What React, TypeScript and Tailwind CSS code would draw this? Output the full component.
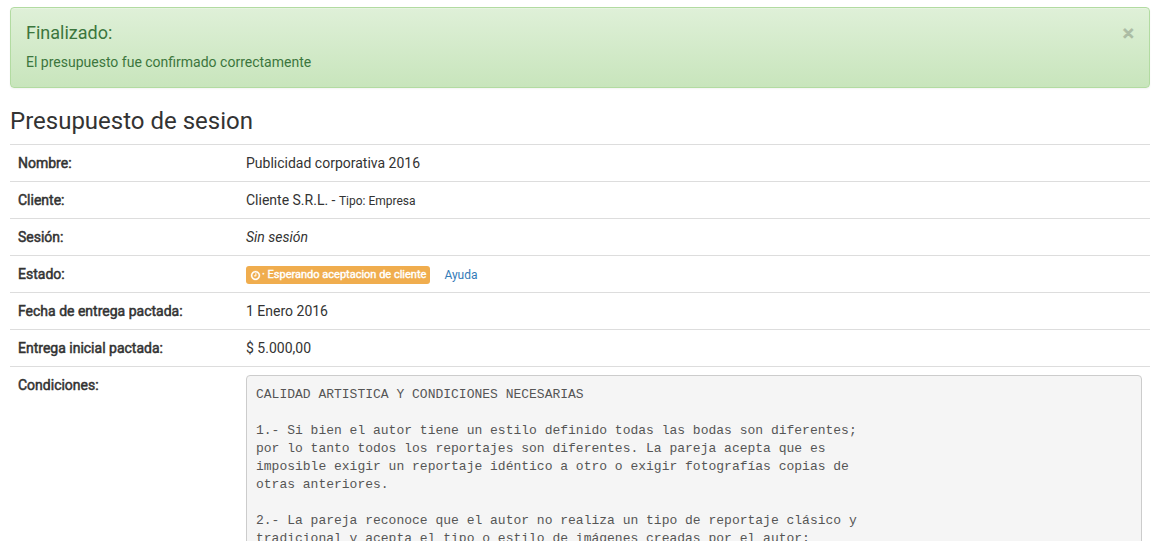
import type { ReactNode } from "react";

const conditions = `CALIDAD ARTISTICA Y CONDICIONES NECESARIAS

1.- Si bien el autor tiene un estilo definido todas las bodas son diferentes;
por lo tanto todos los reportajes son diferentes. La pareja acepta que es
imposible exigir un reportaje idéntico a otro o exigir fotografías copias de
otras anteriores.

2.- La pareja reconoce que el autor no realiza un tipo de reportaje clásico y
tradicional y acepta el tipo o estilo de imágenes creadas por el autor;`;

function Row({ label, children }: { label: string; children: ReactNode }) {
  return (
    <tr className="border-t border-[#ddd]">
      <th
        scope="row"
        className="w-1/5 p-2 text-left align-top font-normal [-webkit-text-stroke:0.5px_currentColor]"
      >
        {label}
      </th>
      <td className="p-2 align-top">{children}</td>
    </tr>
  );
}

function ClockIcon() {
  return (
    <svg
      viewBox="0 128 1536 1536"
      className="size-[9px]"
      fill="currentColor"
      stroke="currentColor"
      strokeWidth="50"
      overflow="visible"
      aria-hidden="true"
    >
      <path d="M896 544v448q0 14-9 23t-23 9h-320q-14 0-23-9t-9-23v-64q0-14 9-23t23-9h224v-352q0-14 9-23t23-9h64q14 0 23 9t9 23zM1312 896q0-148-73-273t-198-198-273-73-273 73-198 198-73 273 73 273 198 198 273 73 273-73 198-198 73-273zM1536 896q0 209-103 385.5t-279.5 279.5-385.5 103-385.5-103-279.5-279.5-103-385.5 103-385.5 279.5-279.5 385.5-103 385.5 103 279.5 279.5 103 385.5z" />
    </svg>
  );
}

export default function App() {
  return (
    <main className="bg-white pt-[7px] pr-[7px] pl-[10px] font-['Roboto',sans-serif] text-[14px] leading-[20px] text-[#333]">
      <div
        role="alert"
        className="flex items-start justify-between rounded border border-[#b2dba1] bg-linear-to-b from-[#dff0d8] to-[#c8e5bc] p-[15px] text-[#3c763d] shadow-[inset_0_1px_0_rgba(255,255,255,0.25),0_1px_2px_rgba(0,0,0,0.05)]"
      >
        <div>
          <h4 className="mb-[9px] text-[18px] leading-[20px] font-normal">Finalizado:</h4>
          <p>El presupuesto fue confirmado correctamente</p>
        </div>
        <button
          type="button"
          aria-label="Cerrar"
          className="cursor-pointer text-[21px] leading-[20px] text-black opacity-20 [-webkit-text-stroke:1px_currentColor]"
        >
          ×
        </button>
      </div>

      <h3 className="mt-5 mb-[10px] text-[24px] leading-[26px]">Presupuesto de sesion</h3>

      <table className="w-full table-fixed border-collapse">
        <tbody>
          <Row label="Nombre:">Publicidad corporativa 2016</Row>
          <Row label="Cliente:">
            Cliente S.R.L. - <small className="text-[12px] leading-none">Tipo: Empresa</small>
          </Row>
          <Row label="Sesión:">
            <em>Sin sesión</em>
          </Row>
          <Row label="Estado:">
            <div className="flex h-5 items-center gap-[14px] pt-[2px]">
              <span className="flex h-[18px] items-center gap-[2px] rounded-[3px] bg-[#f0ad4e] pr-1 pl-[5px] text-[11px] text-white [-webkit-text-stroke:0.4px_currentColor]">
                <ClockIcon />
                · Esperando aceptacion de cliente
              </span>
              <a href="#ayuda" className="text-[12px] text-[#337ab7]">
                Ayuda
              </a>
            </div>
          </Row>
          <Row label="Fecha de entrega pactada:">1 Enero 2016</Row>
          <Row label="Entrega inicial pactada:">$ 5.000,00</Row>
          <Row label="Condiciones:">
            <pre className="rounded border border-[#ccc] bg-[#f5f5f5] px-[9px] py-[10px] font-['Liberation_Mono','Courier_New',monospace] text-[13px] leading-[18px] whitespace-pre-wrap text-[#555]">
              {conditions}
            </pre>
          </Row>
        </tbody>
      </table>
    </main>
  );
}
